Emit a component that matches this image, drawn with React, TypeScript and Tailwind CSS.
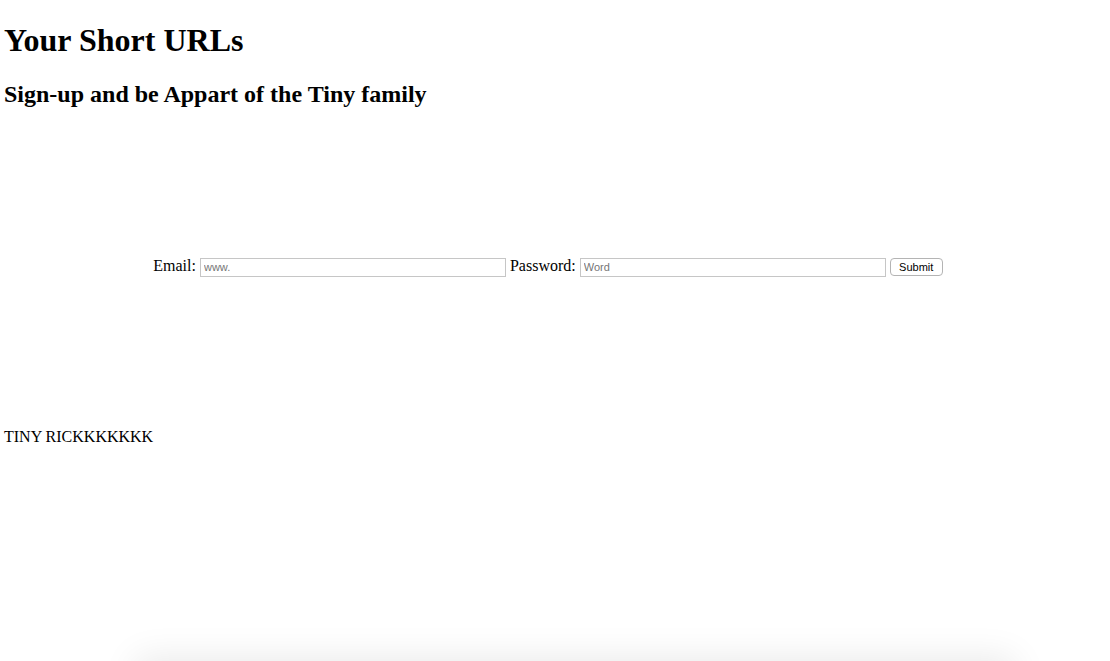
export default function App() {
  return (
    <div className="min-h-[661px] bg-white text-black font-['Liberation_Serif',serif] pl-[4px] pr-[18px]">
      {/* ── Header ── */}
      <h1 className="pt-[22px] text-[32px] leading-[37px] font-bold">Your Short URLs</h1>
      <h2 className="mt-[21px] text-[24px] leading-[28px] font-bold">Sign-up and be Appart of the Tiny family</h2>

      {/* ── Sign-up form ── */}
      <form className="mt-[148px] text-center text-[16px] leading-[20px]" onSubmit={(e) => e.preventDefault()}>
        <label>
          Email:{' '}
          <input
            type="text"
            placeholder="www."
            className="w-[306px] h-[19px] px-[3px] align-baseline border border-[#c6c6c6] bg-white text-[11px] font-['Liberation_Sans',sans-serif] placeholder:text-[#767676] outline-none"
          />
        </label>{' '}
        <label>
          Password:{' '}
          <input
            type="password"
            placeholder="Word"
            className="w-[306px] h-[19px] px-[3px] align-baseline border border-[#c6c6c6] bg-white text-[11px] font-['Liberation_Sans',sans-serif] placeholder:text-[#767676] outline-none"
          />
        </label>{' '}
        <button
          type="submit"
          className="w-[53px] h-[18px] align-baseline rounded-[4px] border border-[#b4b4b4] bg-white text-[11px] leading-[16px] font-['Liberation_Sans',sans-serif] text-black"
        >
          Submit
        </button>
      </form>

      <p className="mt-[151px] text-[16px] leading-[18px]">TINY RICKKKKKKK</p>

      {/* shadow of the card just below the fold */}
      <div className="mt-[220px] ml-[140px] mr-[86px] h-[40px] bg-white shadow-[0_0_36px_8px_rgba(0,0,0,0.09)]" />
    </div>
  );
}
